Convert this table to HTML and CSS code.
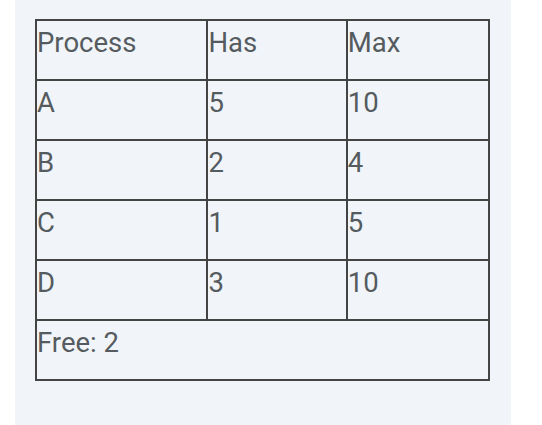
FILE: index.html
```html
<!DOCTYPE html>
<html>
<head>
<meta charset="utf-8">
<link rel="stylesheet" href="styles.css">
</head>
<body>
<div class="panel">
  <table class="grid">
    <tr><td class="c1">Process</td><td class="c2">Has</td><td class="c3">Max</td></tr>
    <tr><td>A</td><td>5</td><td>10</td></tr>
    <tr><td>B</td><td>2</td><td>4</td></tr>
    <tr><td>C</td><td>1</td><td>5</td></tr>
    <tr><td>D</td><td>3</td><td>10</td></tr>
    <tr><td colspan="3">Free: 2</td></tr>
  </table>
</div>
</body>
</html>
```
FILE: styles.css
```css
html, body {
  margin: 0;
  padding: 0;
  background: #ffffff;
}
.panel {
  margin-left: 15px;
  width: 496px;
  height: 425px;
  box-sizing: border-box;
  padding: 19px 0 0 20px;
  background: #f1f5f9;
}
.grid {
  border-collapse: separate;
  border-spacing: 0;
  border: 1px solid #444;
  width: 455px;
  font-family: Roboto, "Liberation Sans", sans-serif;
  font-size: 27.5px;
  line-height: 1.5;
  color: #555b5f;
}
.grid td {
  border: 1px solid #444;
  padding: 1px 0 0 0;
  height: 57px;
  vertical-align: top;
  text-align: left;
}
.grid .c1 { width: 170px; }
.grid .c2 { width: 138px; }
.grid .c3 { width: 141px; }
```
